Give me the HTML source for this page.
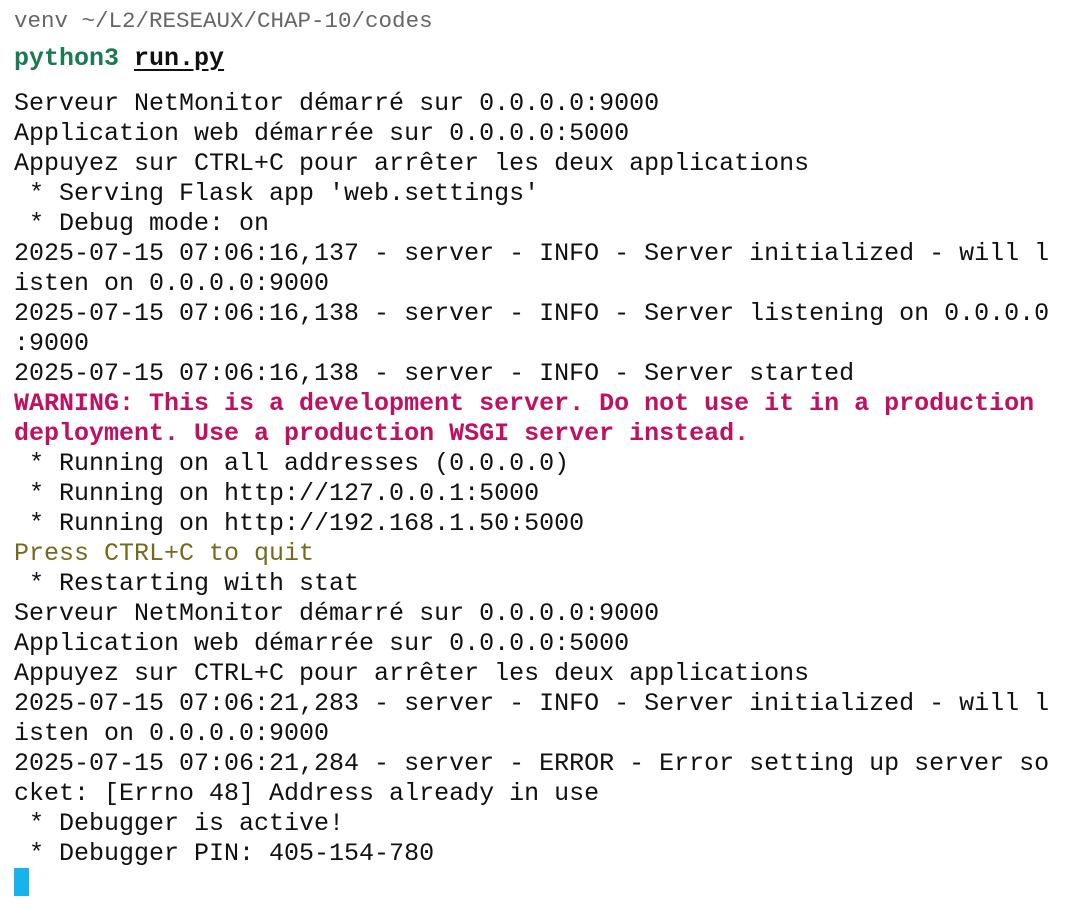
<!DOCTYPE html>
<html><head><meta charset="utf-8"><style>
html,body{margin:0;padding:0;background:#fff;width:1072px;height:920px;overflow:hidden}
body{font-family:"Liberation Mono",monospace;color:#111;}
.h{position:absolute;left:14px;top:6px;font-size:22.5px;color:#666;line-height:30px;white-space:pre}
.c{position:absolute;left:14px;top:44px;font-size:25px;line-height:30px;font-weight:bold;white-space:pre}
.g{color:#1a7a52}
.u{text-decoration:underline;text-underline-offset:4px}
.o{position:absolute;left:14px;top:89px;font-size:25px;line-height:30px;white-space:pre}
.w{color:#c0105f;font-weight:bold}
.y{color:#74691e}
.cur{position:absolute;left:14px;top:868px;width:15px;height:28px;background:#17b3ec}
</style></head><body>
<div class="h">venv ~/L2/RESEAUX/CHAP-10/codes</div>
<div class="c"><span class="g">python3</span> <span class="u">run.py</span></div>
<div class="o">Serveur NetMonitor démarré sur 0.0.0.0:9000
Application web démarrée sur 0.0.0.0:5000
Appuyez sur CTRL+C pour arrêter les deux applications
 * Serving Flask app 'web.settings'
 * Debug mode: on
2025-07-15 07:06:16,137 - server - INFO - Server initialized - will l
isten on 0.0.0.0:9000
2025-07-15 07:06:16,138 - server - INFO - Server listening on 0.0.0.0
:9000
2025-07-15 07:06:16,138 - server - INFO - Server started
<span class="w">WARNING: This is a development server. Do not use it in a production
deployment. Use a production WSGI server instead.</span>
 * Running on all addresses (0.0.0.0)
 * Running on http://127.0.0.1:5000
 * Running on http://192.168.1.50:5000
<span class="y">Press CTRL+C to quit</span>
 * Restarting with stat
Serveur NetMonitor démarré sur 0.0.0.0:9000
Application web démarrée sur 0.0.0.0:5000
Appuyez sur CTRL+C pour arrêter les deux applications
2025-07-15 07:06:21,283 - server - INFO - Server initialized - will l
isten on 0.0.0.0:9000
2025-07-15 07:06:21,284 - server - ERROR - Error setting up server so
cket: [Errno 48] Address already in use
 * Debugger is active!
 * Debugger PIN: 405-154-780</div>
<div class="cur"></div>
</body></html>
